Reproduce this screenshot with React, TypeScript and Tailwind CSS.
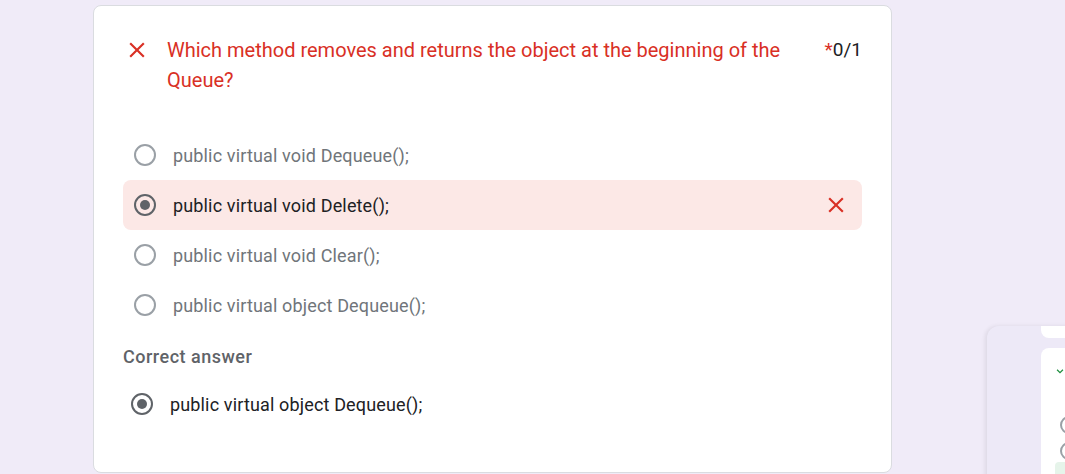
import React from 'react';

const XMark = ({ className }: { className?: string }) => (
  <svg viewBox="0 0 24 24" className={className} fill="currentColor">
    <path d="M19 6.41 17.59 5 12 10.59 6.41 5 5 6.41 10.59 12 5 17.59 6.41 19 12 13.41 17.59 19 19 17.59 13.41 12z" />
  </svg>
);

const Radio = ({ checked }: { checked?: boolean }) => (
  <div
    className={`w-[22px] h-[22px] rounded-full border-2 flex items-center justify-center shrink-0 ${
      checked ? 'border-[#5f6368]' : 'border-[#9aa0a6]'
    }`}
  >
    {checked && <div className="w-[10px] h-[10px] rounded-full bg-[#5f6368]" />}
  </div>
);

const options = [
  { label: 'public virtual void Dequeue();', picked: false },
  { label: 'public virtual void Delete();', picked: true },
  { label: 'public virtual void Clear();', picked: false },
  { label: 'public virtual object Dequeue();', picked: false },
];

export default function App() {
  return (
    <div
      className="relative w-[1065px] h-[474px] overflow-hidden bg-[#f0ebf8]"
      style={{ fontFamily: 'Roboto, "Liberation Sans", sans-serif' }}
    >
      {/* Question card */}
      <div className="ml-[93px] mt-[5px] w-[799px] h-[468px] bg-white border border-[#dadce0] rounded-lg px-[29px] pt-[29px]">
        <div className="flex items-start">
          <XMark className="w-[26px] h-[26px] text-[#d93025] ml-[1px] mt-[2px] shrink-0" />
          <div className="ml-[17px] flex-1 text-[20px] leading-[30px] text-[#d93025] pr-[30px]">
            Which method removes and returns the object at the beginning of the Queue?
          </div>
          <div className="text-[19px] leading-[30px] text-[#202124] shrink-0">
            <span className="text-[#d93025]">*</span>0/1
          </div>
        </div>

        {/* Options */}
        <div className="mt-[35px] flex flex-col">
          {options.map((o) => (
            <div
              key={o.label}
              className={`h-[50px] flex items-center rounded-lg pl-[11px] pr-[13px] ${o.picked ? 'bg-[#fce8e6]' : ''}`}
            >
              <Radio checked={o.picked} />
              <span
                className={`ml-[17px] text-[18px] tracking-[0.15px] flex-1 ${
                  o.picked ? 'text-[#202124]' : 'text-[#70757a]'
                }`}
              >
                {o.label}
              </span>
              {o.picked && <XMark className="w-[26px] h-[26px] text-[#d93025]" />}
            </div>
          ))}
        </div>

        {/* Correct answer */}
        <div className="mt-[17px] text-[18px] leading-[20px] font-medium tracking-[0.5px] text-[#5f6368]">
          Correct answer
        </div>
        <div className="mt-[12px] h-[50px] flex items-center pl-[8px]">
          <Radio checked />
          <span className="ml-[17px] text-[18px] tracking-[0.15px] text-[#202124]">public virtual object Dequeue();</span>
        </div>
      </div>

      {/* Side panel peeking in at the right */}
      <div className="absolute left-[987px] top-[326px] w-[100px] h-[160px] bg-[#ede9f7] rounded-tl-xl shadow-[-2px_0_4px_rgba(0,0,0,0.08)] pl-[54px]">
        <div className="h-[12px] bg-white rounded-bl-lg" />
        <div className="mt-[10px] h-[140px] bg-white rounded-tl-lg pl-[14px] pt-[18px]">
          <svg viewBox="0 0 24 24" className="w-[10px] h-[10px] text-[#1e8e3e]" fill="none" stroke="currentColor" strokeWidth="3">
            <path d="M5 9l7 7 7-7" />
          </svg>
          <div className="mt-[40px] w-[18px] h-[18px] rounded-full border-2 border-[#9aa0a6] ml-[5px]" />
          <div className="mt-[8px] w-[18px] h-[18px] rounded-full border-2 border-[#9aa0a6] ml-[5px]" />
          <div className="mt-[2px] h-[20px] bg-[#e6f4ea] rounded" />
        </div>
      </div>
    </div>
  );
}
